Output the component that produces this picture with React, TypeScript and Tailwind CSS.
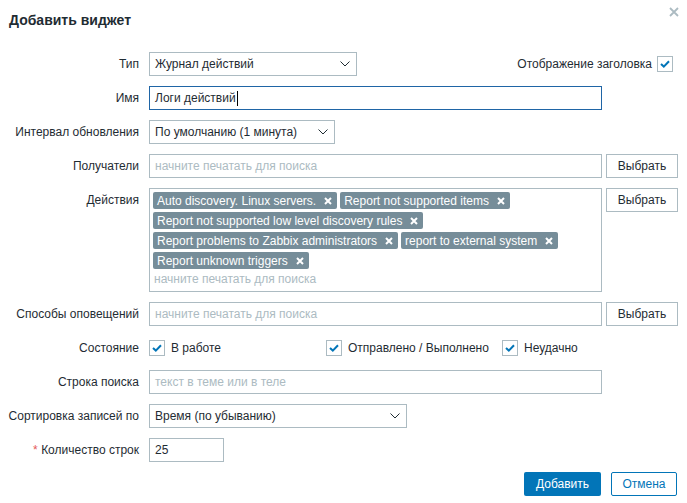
import React from "react";

const border = "border border-[#acbbc2]";

function Check({ label }: { label?: string }) {
  return (
    <span className="flex items-center gap-[6px]">
      <span className={`flex h-[16px] w-[16px] items-center justify-center bg-white ${border}`}>
        <svg width="10" height="8" viewBox="0 0 10 8" fill="none">
          <path d="M1 4l2.8 2.6L9 1.2" stroke="#0275b8" strokeWidth="2" />
        </svg>
      </span>
      {label && <span>{label}</span>}
    </span>
  );
}

function Chevron() {
  return (
    <svg width="10" height="6" viewBox="0 0 10 6" fill="none" className="ml-auto">
      <path d="M0.5 0.5L5 5l4.5-4.5" stroke="#1f2c33" strokeWidth="1" />
    </svg>
  );
}

function Select({ value, width }: { value: string; width: string }) {
  return (
    <div className={`flex h-[24px] items-center bg-white pl-[5px] pr-[6px] ${border} ${width}`}>
      <span>{value}</span>
      <Chevron />
    </div>
  );
}

function Input({ placeholder, width = "w-[453px]" }: { placeholder: string; width?: string }) {
  return (
    <div className={`flex h-[24px] items-center bg-white px-[5px] text-[#acbbc2] ${border} ${width}`}>
      {placeholder}
    </div>
  );
}

function PickButton() {
  return (
    <button className={`ml-[4px] h-[24px] w-[72px] bg-white text-[#1f2c33] ${border}`}>
      Выбрать
    </button>
  );
}

function Tag({ text }: { text: string }) {
  return (
    <span className="flex h-[17px] items-center gap-[8px] rounded-[2px] bg-[#768d99] pl-[4px] pr-[5px] text-white">
      <span>{text}</span>
      <svg width="8" height="8" viewBox="0 0 8 8">
        <path d="M1 1l6 6M7 1L1 7" stroke="white" strokeWidth="2" />
      </svg>
    </span>
  );
}

function Row({ label, children, required }: { label: string; children: React.ReactNode; required?: boolean }) {
  return (
    <div className="flex items-start">
      <div className="w-[139px] shrink-0 text-right leading-[24px]">
        {required && <span className="text-[#e45959]">* </span>}
        {label}
      </div>
      <div className="ml-[10px] flex flex-1 items-start">{children}</div>
    </div>
  );
}

export default function App() {
  const tags = [
    "Auto discovery. Linux servers.",
    "Report not supported items",
    "Report not supported low level discovery rules",
    "Report problems to Zabbix administrators",
    "report to external system",
    "Report unknown triggers",
  ];

  return (
    <div className="relative h-[503px] w-[687px] overflow-hidden bg-white font-['Liberation_Sans',Arial,sans-serif] text-[12px] text-[#1f2c33]">
      <div className="h-[52px] pl-[9px] pt-[11px]">
        <h2 className="text-[14px] font-bold leading-[18px] text-[#1f2c33]">Добавить виджет</h2>
      </div>
      <button className="absolute right-[7px] top-[6px] p-[1px]">
        <svg width="10" height="10" viewBox="0 0 10 10">
          <path d="M1 1l8 8M9 1L1 9" stroke="#acbbc2" strokeWidth="1.8" />
        </svg>
      </button>

      <div className="flex flex-col gap-[10px] pr-[9px]">
        <Row label="Тип">
          <Select value="Журнал действий" width="w-[208px]" />
          <div className="ml-auto flex h-[24px] items-center gap-[5px] pr-[5px]">
            <span>Отображение заголовка</span>
            <Check />
          </div>
        </Row>

        <Row label="Имя">
          <div className="flex h-[24px] w-[453px] items-center border border-[#1f65a6] bg-white px-[5px]">
            Логи действий
            <span className="ml-[1px] h-[15px] w-px bg-black" />
          </div>
        </Row>

        <Row label="Интервал обновления">
          <Select value="По умолчанию (1 минута)" width="w-[186px]" />
        </Row>

        <Row label="Получатели">
          <Input placeholder="начните печатать для поиска" />
          <PickButton />
        </Row>

        <Row label="Действия">
          <div className={`h-[104px] w-[453px] bg-white px-[3px] pt-[3px] ${border}`}>
            <div className="flex flex-wrap gap-x-[3px] gap-y-[3px]">
              {tags.map((t) => (
                <Tag key={t} text={t} />
              ))}
            </div>
            <div className="pl-[1px] leading-[20px] text-[#acbbc2]">начните печатать для поиска</div>
          </div>
          <PickButton />
        </Row>

        <Row label="Способы оповещений">
          <Input placeholder="начните печатать для поиска" />
          <PickButton />
        </Row>

        <Row label="Состояние">
          <div className="flex h-[24px] items-center">
            <div className="w-[177px]">
              <Check label="В работе" />
            </div>
            <div className="w-[176px]">
              <Check label="Отправлено / Выполнено" />
            </div>
            <div>
              <Check label="Неудачно" />
            </div>
          </div>
        </Row>

        <Row label="Строка поиска">
          <Input placeholder="текст в теме или в теле" />
        </Row>

        <Row label="Сортировка записей по">
          <Select value="Время (по убыванию)" width="w-[258px]" />
        </Row>

        <Row label="Количество строк" required>
          <div className={`flex h-[24px] w-[75px] items-center bg-white px-[5px] ${border}`}>25</div>
        </Row>

        <div className="flex justify-end gap-[10px] pr-[1px]">
          <button className="h-[24px] w-[77px] rounded-[2px] bg-[#0275b8] text-white">Добавить</button>
          <button className="h-[24px] w-[66px] rounded-[2px] border border-[#0275b8] bg-white text-[#0275b8]">
            Отмена
          </button>
        </div>
      </div>
    </div>
  );
}
